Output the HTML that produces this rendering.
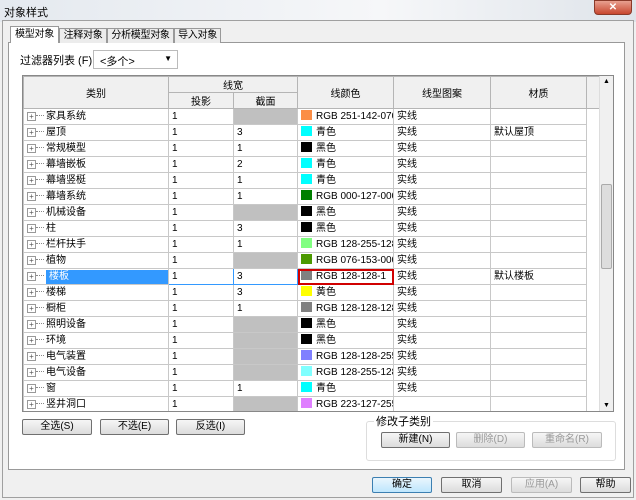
<!DOCTYPE html><html><head><meta charset="utf-8"><style>
*{margin:0;padding:0;box-sizing:border-box}
body{width:636px;height:500px;overflow:hidden;background:#f0f0f0;font-family:"Liberation Sans","Noto Sans CJK SC",sans-serif;font-size:11px;color:#000;position:relative}
.a{position:absolute}
.title{left:0;top:0;width:636px;height:22px;background:linear-gradient(90deg,#e4e9ef,#f6f7f9 60%,#dfe4ea);}
.frame{left:2px;top:20px;width:632px;height:478px;border:1px solid #a0a0a0;background:#f0f0f0}
.panel{left:8px;top:42px;width:617px;height:428px;border:1px solid #999;background:#fff}
.tab{top:28px;height:15px;border:1px solid #999;border-bottom:none;background:#ececec;font-size:10px;line-height:13px;padding:0;text-align:center;white-space:nowrap;letter-spacing:-0.3px}
.btn{height:16px;border:1px solid #707070;border-radius:2px;background:linear-gradient(#f6f6f6,#dcdcdc);text-align:center;line-height:14px;font-size:10px}
table{border-collapse:collapse;table-layout:fixed}
td{border:1px solid #c8c8c8;height:16px;padding:0 3px;white-space:nowrap;overflow:hidden;font-size:10px;line-height:14px}
th{border:1px solid #b5b5b5;font-weight:normal;background:#f0f0f0;font-size:10px;height:16px}
.g{background:#c0c0c0}
.sw{display:inline-block;width:11px;height:10px;vertical-align:-1px;margin-right:4px}
.pl{display:inline-block;width:9px;height:9px;border:1px solid #999;font-size:8px;line-height:7px;text-align:center;color:#555;margin-right:0;vertical-align:0}
.ln{display:inline-block;width:8px;border-top:1px dotted #888;vertical-align:3px;margin-right:2px}
</style></head><body>
<div class="a title"></div>
<div class="a" style="left:4px;top:4px;font-size:11px">对象样式</div>
<div class="a" style="left:594px;top:0;width:38px;height:15px;background:linear-gradient(#e8a090,#c8472f);border:1px solid #8a3a2a;border-radius:0 0 4px 4px;color:#fff;text-align:center;font-size:10px;line-height:13px;font-weight:bold">✕</div>
<div class="a frame"></div>
<div class="a panel"></div>
<div class="a tab" style="left:10px;top:26px;width:49px;height:17px;line-height:15px;background:#fff;z-index:2">模型对象</div>
<div class="a tab" style="left:59px;width:48px">注释对象</div>
<div class="a tab" style="left:107px;width:67px">分析模型对象</div>
<div class="a tab" style="left:174px;width:47px">导入对象</div>
<div class="a" style="left:20px;top:52px">过滤器列表 (F):</div>
<div class="a" style="left:93px;top:50px;width:85px;height:19px;border:1px solid #bbb;background:#fff;padding:2px 6px;font-size:11px">&lt;多个&gt;<span style="position:absolute;right:5px;top:3px;font-size:8px">▼</span></div>
<div class="a" style="left:22px;top:75px;width:592px;height:337px;border:1px solid #888;overflow:hidden;background:#fff">
<table style="width:578px">
<colgroup><col style="width:145px"><col style="width:65px"><col style="width:64px"><col style="width:96px"><col style="width:97px"><col style="width:96px"><col style="width:15px"></colgroup>
<tr><th rowspan="2" style="height:32px">类别</th><th colspan="2">线宽</th><th rowspan="2">线颜色</th><th rowspan="2">线型图案</th><th rowspan="2">材质</th><th rowspan="2" style="border-right:none"></th></tr>
<tr><th>投影</th><th>截面</th></tr>
<tbody id="tb"></tbody>
</table>
<div class="a" style="right:0;top:0;width:14px;height:335px;background:#f0f0f0;border-left:1px solid #ddd"><div class="a" style="left:1px;top:108px;width:11px;height:85px;background:#ddd;border:1px solid #aaa;border-radius:2px"></div><div class="a" style="left:3px;top:2px;font-size:7px">▲</div><div class="a" style="left:3px;bottom:2px;font-size:7px">▼</div></div>
</div>
<div class="a btn" style="left:22px;top:419px;width:70px">全选(S)</div>
<div class="a btn" style="left:100px;top:419px;width:69px">不选(E)</div>
<div class="a btn" style="left:176px;top:419px;width:69px">反选(I)</div>
<div class="a" style="left:366px;top:421px;width:250px;height:40px;border:1px solid #ddd;border-radius:3px"></div>
<div class="a" style="left:374px;top:413px;background:#fff;padding:0 2px">修改子类别</div>
<div class="a btn" style="left:381px;top:432px;width:69px">新建(N)</div>
<div class="a btn" style="left:456px;top:432px;width:69px;color:#999;border-color:#bbb">删除(D)</div>
<div class="a btn" style="left:532px;top:432px;width:70px;color:#999;border-color:#bbb">重命名(R)</div>
<div class="a btn" style="left:372px;top:477px;width:60px;border-color:#3c7fb1;background:linear-gradient(#eaf6fd,#bee6fd)">确定</div>
<div class="a btn" style="left:441px;top:477px;width:61px">取消</div>
<div class="a btn" style="left:511px;top:477px;width:61px;color:#999;border-color:#bbb">应用(A)</div>
<div class="a btn" style="left:580px;top:477px;width:51px">帮助</div>
<script>
var R=[["家具系统","1","g","#fb8e46","RGB 251-142-070","实线",""],
["屋顶","1","3","#00ffff","青色","实线","默认屋顶"],
["常规模型","1","1","#000","黑色","实线",""],
["幕墙嵌板","1","2","#00ffff","青色","实线",""],
["幕墙竖梃","1","1","#00ffff","青色","实线",""],
["幕墙系统","1","1","#007f00","RGB 000-127-000","实线",""],
["机械设备","1","g","#000","黑色","实线",""],
["柱","1","3","#000","黑色","实线",""],
["栏杆扶手","1","1","#80ff80","RGB 128-255-128","实线",""],
["植物","1","g","#4c9900","RGB 076-153-000","实线",""],
["楼板","1","3","#808080","RGB 128-128-1","实线","默认楼板"],
["楼梯","1","3","#ffff00","黄色","实线",""],
["橱柜","1","1","#808080","RGB 128-128-128","实线",""],
["照明设备","1","g","#000","黑色","实线",""],
["环境","1","g","#000","黑色","实线",""],
["电气装置","1","g","#8080ff","RGB 128-128-255","实线",""],
["电气设备","1","g","#80ffff","RGB 128-255-128","实线",""],
["窗","1","1","#00ffff","青色","实线",""],
["竖井洞口","1","g","#df7fff","RGB 223-127-255","",""]];
var h="";R.forEach(function(r,i){var s=i==10;
h+='<tr><td><span class="pl">+</span><span class="ln"></span>'+(s?'<span style="display:inline-block;width:125px;background:#3399ff;color:#fff;padding:0 3px">'+r[0]+'</span>':r[0])+'</td><td'+(s?' style="border:1px solid #3399ff"':'')+'>'+r[1]+'</td>'+(r[2]=="g"?'<td class="g"></td>':'<td'+(s?' style="border:1px solid #3399ff"':'')+'>'+r[2]+'</td>')+'<td'+(s?' style="outline:2px solid #d00000;outline-offset:-2px"':'')+'><span class="sw" style="background:'+r[3]+'"></span>'+r[4]+'</td><td>'+r[5]+'</td><td>'+r[6]+'</td><td style="border:none"></td></tr>';});
document.getElementById("tb").innerHTML=h;
</script>
</body></html>
